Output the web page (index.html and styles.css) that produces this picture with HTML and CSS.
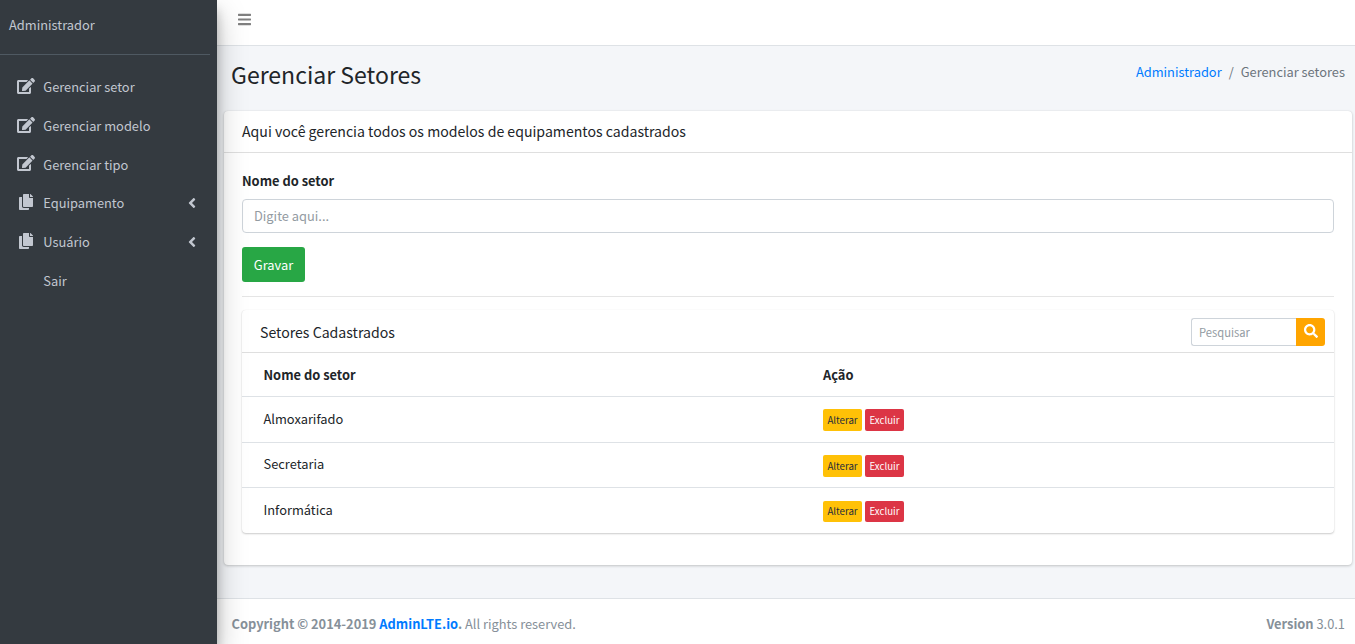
FILE: index.html
```html
<!DOCTYPE html>
<html lang="pt-br">
<head>
<meta charset="utf-8">
<title>Gerenciar Setores</title>
<link rel="stylesheet" href="styles.css">
</head>
<body>
<svg class="sprite" aria-hidden="true">
  <symbol id="edit" viewBox="0 0 576 512"><path d="M402.6 83.2l90.2 90.2c3.8 3.8 3.8 10 0 13.8L274.4 405.6l-92.8 10.3c-12.4 1.4-22.9-9.1-21.5-21.5l10.3-92.8L388.8 83.2c3.8-3.8 10-3.8 13.8 0zm162-22.9l-48.8-48.8c-15.2-15.2-39.9-15.2-55.2 0l-35.4 35.4c-3.8 3.8-3.8 10 0 13.8l90.2 90.2c3.8 3.8 10 3.8 13.8 0l35.4-35.4c15.2-15.3 15.2-40 0-55.2zM384 346.2V448H64V128h229.8c3.2 0 6.2-1.3 8.5-3.5l40-40c7.6-7.6 2.2-20.5-8.5-20.5H48C21.500 64 0 85.500 0 112v352c0 26.500 21.500 48 48 48h352c26.500 0 48-21.500 48-48V306.200c0-10.700-12.900-16-20.500-8.500l-40 40c-2.200 2.300-3.500 5.300-3.500 8.500z"/></symbol>
  <symbol id="copy" viewBox="0 0 448 512"><path d="M320 448v40c0 13.255-10.745 24-24 24H24c-13.255 0-24-10.745-24-24V120c0-13.255 10.745-24 24-24h72v296c0 30.879 25.121 56 56 56h168zm0-344V0H152c-13.255 0-24 10.745-24 24v368c0 13.255 10.745 24 24 24h272c13.255 0 24-10.745 24-24V128H344c-13.200 0-24-10.800-24-24zm120.971-31.029L375.029 7.029A24 24 0 0 0 358.059 0H352v96h96v-6.059a24 24 0 0 0-7.029-16.970z"/></symbol>
  <symbol id="angle" viewBox="0 0 256 512"><path d="M31.700 239l136-136c9.400-9.400 24.600-9.400 33.900 0l22.600 22.600c9.400 9.400 9.400 24.600 0 33.900L127.900 256l96.400 96.400c9.400 9.400 9.400 24.600 0 33.900L201.700 409c-9.400 9.400-24.600 9.400-33.900 0l-136-136c-9.500-9.400-9.500-24.600-.1-34z"/></symbol>
  <symbol id="bars" viewBox="0 0 448 512"><path d="M16 132h416c8.837 0 16-7.163 16-16V76c0-8.837-7.163-16-16-16H16C7.163 60 0 67.163 0 76v40c0 8.837 7.163 16 16 16zm0 160h416c8.837 0 16-7.163 16-16v-40c0-8.837-7.163-16-16-16H16c-8.837 0-16 7.163-16 16v40c0 8.837 7.163 16 16 16zm0 160h416c8.837 0 16-7.163 16-16v-40c0-8.837-7.163-16-16-16H16c-8.837 0-16 7.163-16 16v40c0 8.837 7.163 16 16 16z"/></symbol>
  <symbol id="search" viewBox="0 0 512 512"><path d="M505 442.700L405.300 343c-4.500-4.500-10.600-7-17-7H372c27.600-35.300 44-79.700 44-128C416 93.100 322.900 0 208 0S0 93.100 0 208s93.100 208 208 208c48.300 0 92.700-16.400 128-44v16.300c0 6.400 2.500 12.500 7 17l99.700 99.700c9.400 9.400 24.600 9.400 33.900 0l28.300-28.300c9.400-9.400 9.400-24.600.1-34zM208 336c-70.700 0-128-57.200-128-128 0-70.700 57.200-128 128-128 70.700 0 128 57.200 128 128 0 70.700-57.200 128-128 128z"/></symbol>
</svg>
<div class="wrapper">
  <aside class="sidebar">
    <div class="user-panel">Administrador</div>
    <nav class="menu">
      <a class="menu-item"><svg class="icon-edit"><use href="#edit"/></svg><span>Gerenciar setor</span></a>
      <a class="menu-item"><svg class="icon-edit"><use href="#edit"/></svg><span>Gerenciar modelo</span></a>
      <a class="menu-item"><svg class="icon-edit"><use href="#edit"/></svg><span>Gerenciar tipo</span></a>
      <a class="menu-item tree"><svg class="icon-copy"><use href="#copy"/></svg><span>Equipamento</span><svg class="icon-angle"><use href="#angle"/></svg></a>
      <a class="menu-item tree"><svg class="icon-copy"><use href="#copy"/></svg><span>Usuário</span><svg class="icon-angle"><use href="#angle"/></svg></a>
      <a class="menu-item no-icon"><span>Sair</span></a>
    </nav>
  </aside>
  <div class="main">
    <header class="navbar"><svg class="icon-bars"><use href="#bars"/></svg></header>
    <div class="content">
      <div class="content-header">
        <h1 class="page-title">Gerenciar Setores</h1>
        <div class="breadcrumb"><a class="link">Administrador</a><span class="slash">/</span><span>Gerenciar setores</span></div>
      </div>
      <section class="card">
        <div class="card-header"><h3 class="card-title">Aqui você gerencia todos os modelos de equipamentos cadastrados</h3></div>
        <div class="card-body">
          <label class="label" for="nome">Nome do setor</label>
          <input class="input" id="nome" placeholder="Digite aqui...">
          <button class="btn-save">Gravar</button>
          <div class="divider"></div>
          <section class="card inner">
            <div class="inner-header">
              <h3 class="card-title">Setores Cadastrados</h3>
              <div class="search"><input class="search-input" placeholder="Pesquisar"><button class="search-btn"><svg class="icon-search"><use href="#search"/></svg></button></div>
            </div>
            <div class="row head"><span>Nome do setor</span><span>Ação</span></div>
            <div class="row"><span>Almoxarifado</span><div class="actions"><button class="btn-xs warning">Alterar</button><button class="btn-xs danger">Excluir</button></div></div>
            <div class="row short"><span>Secretaria</span><div class="actions"><button class="btn-xs warning">Alterar</button><button class="btn-xs danger">Excluir</button></div></div>
            <div class="row short"><span>Informática</span><div class="actions"><button class="btn-xs warning">Alterar</button><button class="btn-xs danger">Excluir</button></div></div>
          </section>
        </div>
      </section>
    </div>
    <footer class="footer">
      <div><strong>Copyright © 2014-2019 <a class="link">AdminLTE.io</a>.</strong> All rights reserved.</div>
      <div><strong>Version</strong> 3.0.1</div>
    </footer>
  </div>
</div>
</body>
</html>
```
FILE: styles.css
```css
* { box-sizing: border-box; }
body {
  margin: 0;
  font-family: "Noto Sans CJK SC", "Open Sans", sans-serif;
  font-size: 12.850px;
  line-height: 22px;
  color: #212529;
  background: #f4f6f9;
}
h1, h3 { margin: 0; font-weight: 400; }
svg { display: block; fill: currentColor; flex: none; }
input, button { font-family: inherit; margin: 0; outline: none; }
.sprite { display: none; }
.wrapper { display: flex; width: 100%; height: 644px; overflow: hidden; }

.sidebar {
  position: relative;
  z-index: 2;
  flex: none;
  width: 217px;
  background: #343a40;
  color: #c2c7d0;
  box-shadow: 0 14px 28px rgba(0,0,0,.25), 0 10px 10px rgba(0,0,0,.22);
}
.user-panel { height: 55px; margin-right: 7px; padding: 14px 0 0 9px; border-bottom: 1px solid #4f5962; }
.menu { padding-top: 13px; }
.menu-item { display: flex; align-items: center; height: 38.8px; padding: 0 21px 0 17px; }
.menu-item span { flex: 1; }
.menu-item.tree { padding-bottom: 2px; }
.menu-item.no-icon { padding-left: 43.300px; }
.icon-edit { width: 18px; height: 16px; margin: -3px 8.300px 0 0; }
.icon-copy { width: 14px; height: 16px; margin: -1px 10.300px 0 2px; }
.icon-angle { width: 8px; height: 16px; }

.main { flex: 1; min-width: 0; display: flex; flex-direction: column; }
.navbar { height: 46px; padding: 12px 0 0 21px; background: #fff; border-bottom: 1px solid #dee2e6; color: #808080; }
.icon-bars { width: 13px; height: 15px; }
.content { flex: 1; padding: 0 3px 0 7px; }
.content-header { display: flex; justify-content: space-between; height: 65px; padding: 11px 7px 0; }
.page-title { font-size: 23.050px; line-height: 34px; }
.breadcrumb { display: flex; padding-top: 4px; color: #6c757d; }
.slash { padding: 0 7px; }
.link { color: #007bff; }

.card { background: #fff; border-radius: 4px; box-shadow: 0 0 1px rgba(0,0,0,.125), 0 1px 3px rgba(0,0,0,.2); }
.card.inner { box-shadow: 0 0 1px rgba(0,0,0,.1), 0 1px 2px rgba(0,0,0,.2); }
.card-header { height: 42px; padding: 9px 18px 0; border-bottom: 1px solid #dfdfdf; }
.card-title { font-size: 14.110px; line-height: 22px; }
.card-body { display: flex; flex-direction: column; height: 412px; padding: 17px 18px 0; }
.label { font-weight: 700; line-height: 22px; }
.input { height: 34px; margin-top: 7px; padding: 0 11px 1px; font-size: 12.850px; border: 1px solid #ced4da; border-radius: 4px; }
.input::placeholder, .search-input::placeholder { color: #939ba2; opacity: 1; }
.btn-save { align-self: flex-start; width: 63px; height: 35px; margin-top: 14px; padding: 0; font-size: 12.850px; line-height: 22px; color: #fff; background: #28a745; border: 0; border-radius: 3px; }
.divider { height: 1px; margin: 14px 0 13px; background: #e5e5e5; }
.inner-header { display: flex; justify-content: space-between; height: 43px; padding: 8px 9px 0 18px; border-bottom: 1px solid #dfdfdf; }
.inner-header .card-title { padding-top: 3px; }
.search { display: flex; width: 134px; height: 28px; }
.search-input { width: 105px; padding: 0 7px 1px; font-size: 11.200px; border: 1px solid #ced4da; border-right: 0; border-radius: 3px 0 0 3px; }
.search-btn { display: flex; flex: 1; padding: 6px 0 0 8px; color: #fff; background: orange; border: 0; border-radius: 0 3px 3px 0; }
.icon-search { width: 14px; height: 14px; }

.row { display: grid; grid-template-columns: 559.500px 1fr; align-items: center; height: 46px; padding: 0 21.500px; border-bottom: 1px solid #dee2e6; }
.row > span { padding-bottom: 2px; }
.row.head > span { padding-bottom: 0; }
.row.head { height: 44px; font-weight: 700; }
.row.short { height: 45px; }
.row:last-child { height: 45px; border-bottom: 0; }
.actions { display: flex; gap: 3px; padding-top: 1px; }
.btn-xs { width: 39px; height: 22px; padding: 1px 0 0; font-size: 9.700px; line-height: 15px; border: 0; border-radius: 2px; }
.row:last-child .btn-xs { height: 21px; }
.warning { color: #1f2d3d; background: #ffc107; }
.danger { color: #fff; background: #dc3545; }

.footer { display: flex; justify-content: space-between; height: 46px; padding: 14px 10px 0 14.500px; color: #869099; background: #fff; border-top: 1px solid #dee2e6; }
```
